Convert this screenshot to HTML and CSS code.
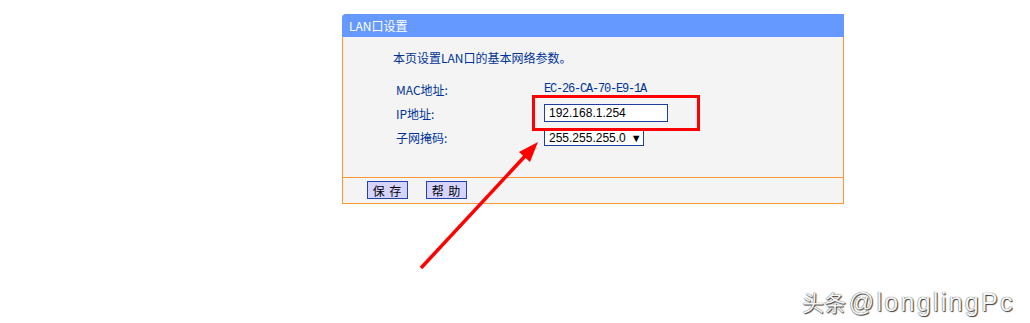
FILE: index.html
```html
<!DOCTYPE html>
<html lang="zh-CN">
<head>
    <meta charset="UTF-8">
    <meta name="viewport" content="width=device-width, initial-scale=1.0">
    <title>LAN口设置</title>
    <link rel="stylesheet" href="styles.css">
</head>
<body>
    <div class="panel">
        <div class="panel_title">LAN口设置</div>
        <div class="panel_body">
            <p class="intro">本页设置LAN口的基本网络参数。</p>
            <div class="form_row">
                <span class="label">MAC地址:</span>
                <span class="mac">EC-26-CA-70-E9-1A</span>
            </div>
            <div class="form_row">
                <span class="label">IP地址:</span>
                <input class="ip_input" type="text" value="192.168.1.254">
            </div>
            <div class="form_row">
                <span class="label">子网掩码:</span>
                <div class="select">255.255.255.0<span class="caret">▼</span></div>
            </div>
        </div>
        <div class="panel_foot">
            <button class="btn">保 存</button>
            <button class="btn">帮 助</button>
        </div>
    </div>

    <!-- 截图上的标注：红框 + 箭头 -->
    <div class="mark_box"></div>
    <svg class="mark_arrow" width="1030" height="323" viewBox="0 0 1030 323">
        <line x1="421" y1="268" x2="527" y2="154" stroke="#ff0000" stroke-width="3.5"/>
        <polygon points="538,142 519,152 530,162" fill="#ff0000"/>
    </svg>

    <div class="watermark"><span class="wm_cn">头条</span> <span class="wm_en">@longlingPc</span></div>
</body>
</html>
```

FILE: styles.css
```css
html, body {
    margin: 0;
    padding: 0;
    background-color: #fff;
}
body {
    position: relative;
    width: 1030px;
    height: 323px;
    overflow: hidden;
    font-family: "Noto Sans CJK SC", sans-serif;
    font-size: 12px;
}
.panel {
    width: 502px;
    margin: 14px 0 0 342px;
}
.panel_title {
    height: 23px;
    line-height: 23px;
    padding-left: 7px;
    color: #fff;
    background-color: #6699ff;
    border-radius: 4px 0 0 0;
}
.panel_body {
    height: 141px;
    padding-top: 13px;
    box-sizing: border-box;
    background-color: #f4f4f4;
    border-left: 1px solid #ff9933;
    border-right: 1px solid #ff9933;
    border-bottom: 1px solid #ff9933;
    color: #003399;
}
.intro {
    margin: 0 0 11px 50px;
    line-height: 16px;
}
.form_row {
    display: flex;
    align-items: center;
    height: 24px;
    padding-left: 53px;
}
.form_row .label {
    width: 148px;
}
.mac {
    font-family: "Liberation Mono", monospace;
    letter-spacing: -1.2px;
}
.ip_input {
    width: 124px;
    height: 18px;
    box-sizing: border-box;
    margin: 0;
    padding: 0 0 0 4px;
    border: 1px solid #1e3fa0;
    background-color: #fff;
    font-family: "Liberation Sans", Arial, sans-serif;
    font-size: 12px;
    color: #000;
    outline: none;
}
.select {
    display: flex;
    align-items: center;
    width: 100px;
    height: 16px;
    box-sizing: border-box;
    margin-top: 1px;
    padding-left: 4px;
    border: 1px solid #1e3fa0;
    background-color: #fff;
    font-family: "Liberation Sans", Arial, sans-serif;
    color: #000;
}
.select .caret {
    margin-left: 5px;
    font-size: 11px;
}
.panel_foot {
    display: flex;
    gap: 18px;
    align-items: center;
    height: 25px;
    padding-left: 24px;
    background-color: #f4f4f4;
    border-left: 1px solid #ff9933;
    border-right: 1px solid #ff9933;
    border-bottom: 1px solid #ff9933;
}
.btn {
    width: 41px;
    height: 18px;
    padding: 0;
    margin-top: -2px;
    border: 1px solid #2244aa;
    background-color: #d4d4ff;
    font-family: "Noto Sans CJK SC", sans-serif;
    font-size: 12px;
    letter-spacing: 1px;
    color: #000;
}
/* 标注层 */
.mark_box {
    position: absolute;
    left: 532px;
    top: 95px;
    width: 168px;
    height: 36px;
    box-sizing: border-box;
    border: 3px solid #ff0000;
}
.mark_arrow {
    position: absolute;
    left: 0;
    top: 0;
    pointer-events: none;
}
.watermark {
    position: absolute;
    left: 802px;
    top: 286px;
    line-height: 30px;
    color: #f4f4f4;
    text-shadow: 0 0 1px #222, 1px 1px 1px #444;
    white-space: nowrap;
}
.wm_cn {
    font-family: "Noto Sans CJK SC", sans-serif;
    font-size: 22px;
}
.wm_en {
    font-family: "Liberation Sans", Arial, sans-serif;
    font-size: 25px;
    letter-spacing: 2.3px;
}
```
